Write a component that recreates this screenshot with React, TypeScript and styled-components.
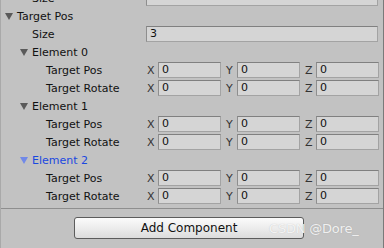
import React from 'react'
import styled, { createGlobalStyle } from 'styled-components'

const GlobalStyle = createGlobalStyle`
  html, body {
    margin: 0;
    padding: 0;
    background: #c2c2c2;
    overflow: hidden;
  }
  body {
    font-family: "DejaVu Sans", Verdana, sans-serif;
    font-size: 11px;
    color: #111;
  }
`

const Panel = styled.div`
  position: relative;
  width: 384px;
  height: 248px;
  box-sizing: border-box;
  border-left: 1px solid #a9a9a9;
  border-right: 1px solid #7a7a7a;
  overflow: hidden;
`

const List = styled.div`
  margin-top: -11px;
  display: flex;
  flex-direction: column;
`

const Row = styled.div<{ indent: number }>`
  height: 18px;
  display: flex;
  align-items: center;
  padding-left: ${p => p.indent}px;
  padding-right: 5px;
  box-sizing: border-box;
`

const Foldout = styled.div<{ indent: number; active?: boolean }>`
  height: 18px;
  display: flex;
  align-items: center;
  padding-left: ${p => p.indent}px;
  color: ${p => (p.active ? '#1a48e0' : '#111')};
`

const Arrow = styled.span<{ active?: boolean }>`
  width: 0;
  height: 0;
  border-left: 4px solid transparent;
  border-right: 4px solid transparent;
  border-top: 7px solid ${p => (p.active ? '#7189e8' : '#5a5a5a')};
  margin-right: 4px;
  margin-top: 1px;
`

const Label = styled.span<{ width: number }>`
  width: ${p => p.width}px;
  flex: none;
  white-space: nowrap;
`

const Field = styled.div<{ width?: number }>`
  height: 16px;
  box-sizing: border-box;
  ${p => (p.width ? `width: ${p.width}px;` : 'flex: 1;')}
  background: #d5d5d5;
  border: 1px solid #a3a3a3;
  border-top-color: #808080;
  border-left-color: #8e8e8e;
  padding-left: 3px;
  line-height: 14px;
  font-size: 11px;
`

const Vector = styled.div`
  display: grid;
  grid-template-columns: repeat(3, 74px);
  column-gap: 5px;
`

const Axis = styled.div`
  display: flex;
  align-items: center;
`

const AxisName = styled.span`
  width: 11px;
  flex: none;
  color: #333;
`

const Separator = styled.div`
  margin-top: 3px;
  height: 1px;
  background: #8e8e8e;
`

const Footer = styled.div`
  display: flex;
  justify-content: center;
  padding-top: 8px;
  padding-right: 6px;
`

const Button = styled.button`
  width: 230px;
  height: 22px;
  border: 1px solid #5c5c5c;
  border-radius: 3px;
  background: linear-gradient(#fbfbfb, #e9e9e9 60%, #dcdcdc);
  font-family: "DejaVu Sans", Verdana, sans-serif;
  font-size: 12px;
  color: #111;
  padding: 0;
`

const Watermark = styled.div`
  position: absolute;
  left: 268px;
  top: 221px;
  font-family: "DejaVu Sans", Verdana, sans-serif;
  font-size: 13px;
  color: rgba(250, 250, 250, 0.9);
  text-shadow: 0 0 1px rgba(120, 120, 120, 0.4);
  letter-spacing: -0.2px;
  pointer-events: none;
`

function VectorRow({ label }: { label: string }) {
  return (
    <Row indent={45}>
      <Label width={101}>{label}</Label>
      <Vector>
        {['X', 'Y', 'Z'].map(a => (
          <Axis key={a}>
            <AxisName>{a}</AxisName>
            <Field width={63}>0</Field>
          </Axis>
        ))}
      </Vector>
    </Row>
  )
}

function Element({ index, active }: { index: number; active?: boolean }) {
  return (
    <>
      <Foldout indent={19} active={active}>
        <Arrow active={active} />
        Element {index}
      </Foldout>
      <VectorRow label="Target Pos" />
      <VectorRow label="Target Rotate" />
    </>
  )
}

export default function App() {
  return (
    <Panel>
      <GlobalStyle />
      <List>
        <Row indent={31}>
          <Label width={114}>Size</Label>
          <Field />
        </Row>
        <Foldout indent={4}>
          <Arrow />
          Target Pos
        </Foldout>
        <Row indent={31}>
          <Label width={114}>Size</Label>
          <Field>3</Field>
        </Row>
        <Element index={0} />
        <Element index={1} />
        <Element index={2} active />
      </List>
      <Separator />
      <Footer>
        <Button>Add Component</Button>
      </Footer>
      <Watermark>CSDN @Dore_</Watermark>
    </Panel>
  )
}
